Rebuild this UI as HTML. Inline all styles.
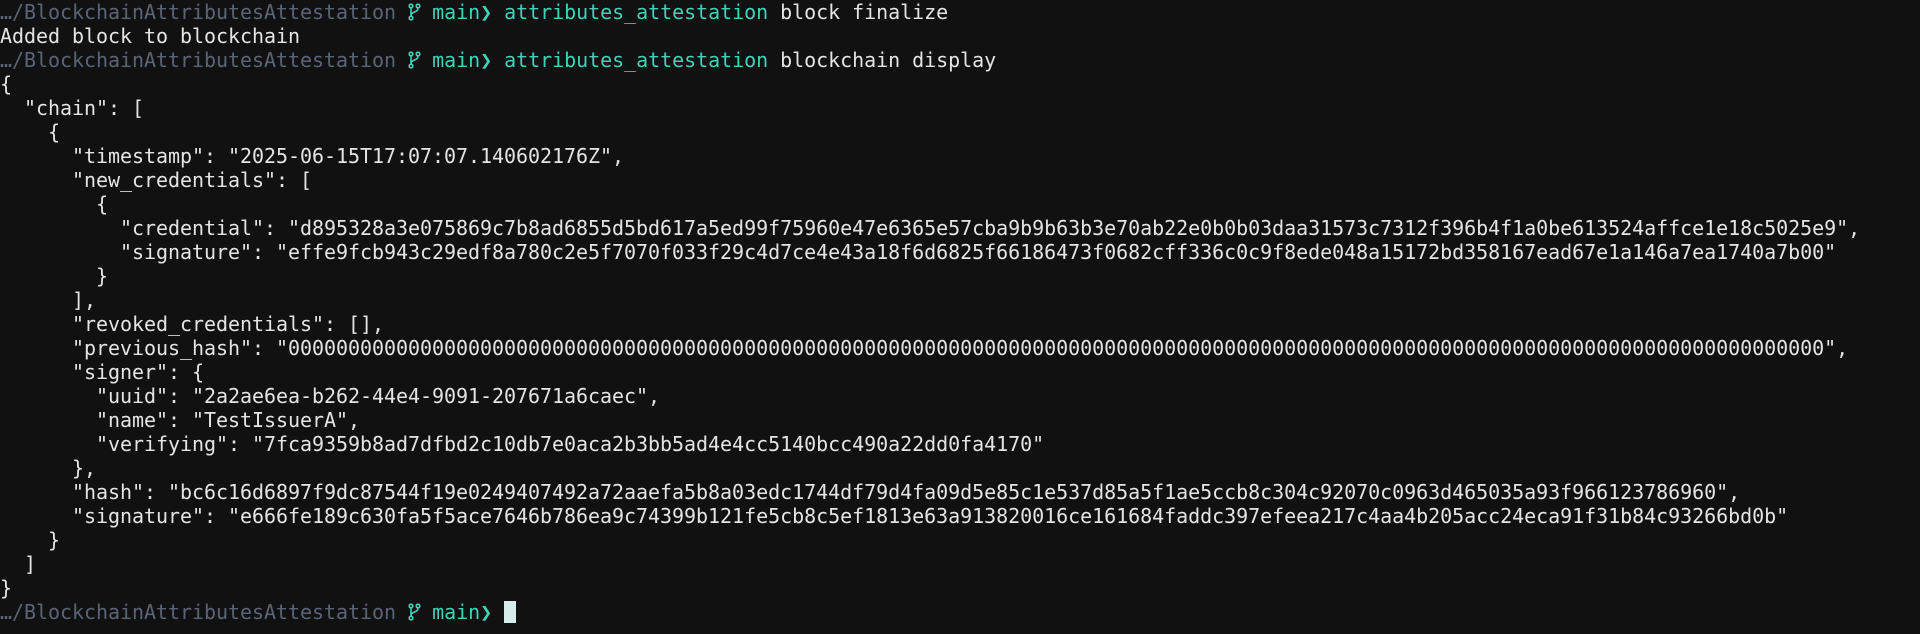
<!DOCTYPE html>
<html><head><meta charset="utf-8"><style>
html,body{margin:0;padding:0;background:#111112;width:1920px;height:634px;overflow:hidden}
pre{margin:0;font-family:"DejaVu Sans Mono","Liberation Mono",monospace;font-size:20px;line-height:24px;color:#e4e4e4;white-space:pre;letter-spacing:-0.04px}
.p{color:#5b6476}.g{color:#3fd3b8}
.ic{display:inline-block;width:12px;height:24px;vertical-align:top;position:relative}
.ic svg{position:absolute;left:0;top:3px}
.cur{display:inline-block;width:12px;height:22px;background:#d5ecea;vertical-align:top;margin-top:1px}
</style></head><body><pre><span class="p">…/BlockchainAttributesAttestation</span> <span class="ic"><svg width="13" height="18" viewBox="0 0 13 18"><g fill="none" stroke="#3fd3b8" stroke-width="1.6"><circle cx="3" cy="3" r="1.8"/><circle cx="10" cy="3" r="1.8"/><circle cx="3" cy="15" r="1.8"/><path d="M3 5v8M10 5c0 5-7 3-7 8"/></g></svg></span> <span class="g">main❯</span> <span class="g">attributes_attestation</span> block finalize
Added block to blockchain
<span class="p">…/BlockchainAttributesAttestation</span> <span class="ic"><svg width="13" height="18" viewBox="0 0 13 18"><g fill="none" stroke="#3fd3b8" stroke-width="1.6"><circle cx="3" cy="3" r="1.8"/><circle cx="10" cy="3" r="1.8"/><circle cx="3" cy="15" r="1.8"/><path d="M3 5v8M10 5c0 5-7 3-7 8"/></g></svg></span> <span class="g">main❯</span> <span class="g">attributes_attestation</span> blockchain display
{
  "chain": [
    {
      "timestamp": "2025-06-15T17:07:07.140602176Z",
      "new_credentials": [
        {
          "credential": "d895328a3e075869c7b8ad6855d5bd617a5ed99f75960e47e6365e57cba9b9b63b3e70ab22e0b0b03daa31573c7312f396b4f1a0be613524affce1e18c5025e9",
          "signature": "effe9fcb943c29edf8a780c2e5f7070f033f29c4d7ce4e43a18f6d6825f66186473f0682cff336c0c9f8ede048a15172bd358167ead67e1a146a7ea1740a7b00"
        }
      ],
      "revoked_credentials": [],
      "previous_hash": "00000000000000000000000000000000000000000000000000000000000000000000000000000000000000000000000000000000000000000000000000000000",
      "signer": {
        "uuid": "2a2ae6ea-b262-44e4-9091-207671a6caec",
        "name": "TestIssuerA",
        "verifying": "7fca9359b8ad7dfbd2c10db7e0aca2b3bb5ad4e4cc5140bcc490a22dd0fa4170"
      },
      "hash": "bc6c16d6897f9dc87544f19e0249407492a72aaefa5b8a03edc1744df79d4fa09d5e85c1e537d85a5f1ae5ccb8c304c92070c0963d465035a93f966123786960",
      "signature": "e666fe189c630fa5f5ace7646b786ea9c74399b121fe5cb8c5ef1813e63a913820016ce161684faddc397efeea217c4aa4b205acc24eca91f31b84c93266bd0b"
    }
  ]
}
<span class="p">…/BlockchainAttributesAttestation</span> <span class="ic"><svg width="13" height="18" viewBox="0 0 13 18"><g fill="none" stroke="#3fd3b8" stroke-width="1.6"><circle cx="3" cy="3" r="1.8"/><circle cx="10" cy="3" r="1.8"/><circle cx="3" cy="15" r="1.8"/><path d="M3 5v8M10 5c0 5-7 3-7 8"/></g></svg></span> <span class="g">main❯</span> <span class="cur"></span></pre></body></html>
